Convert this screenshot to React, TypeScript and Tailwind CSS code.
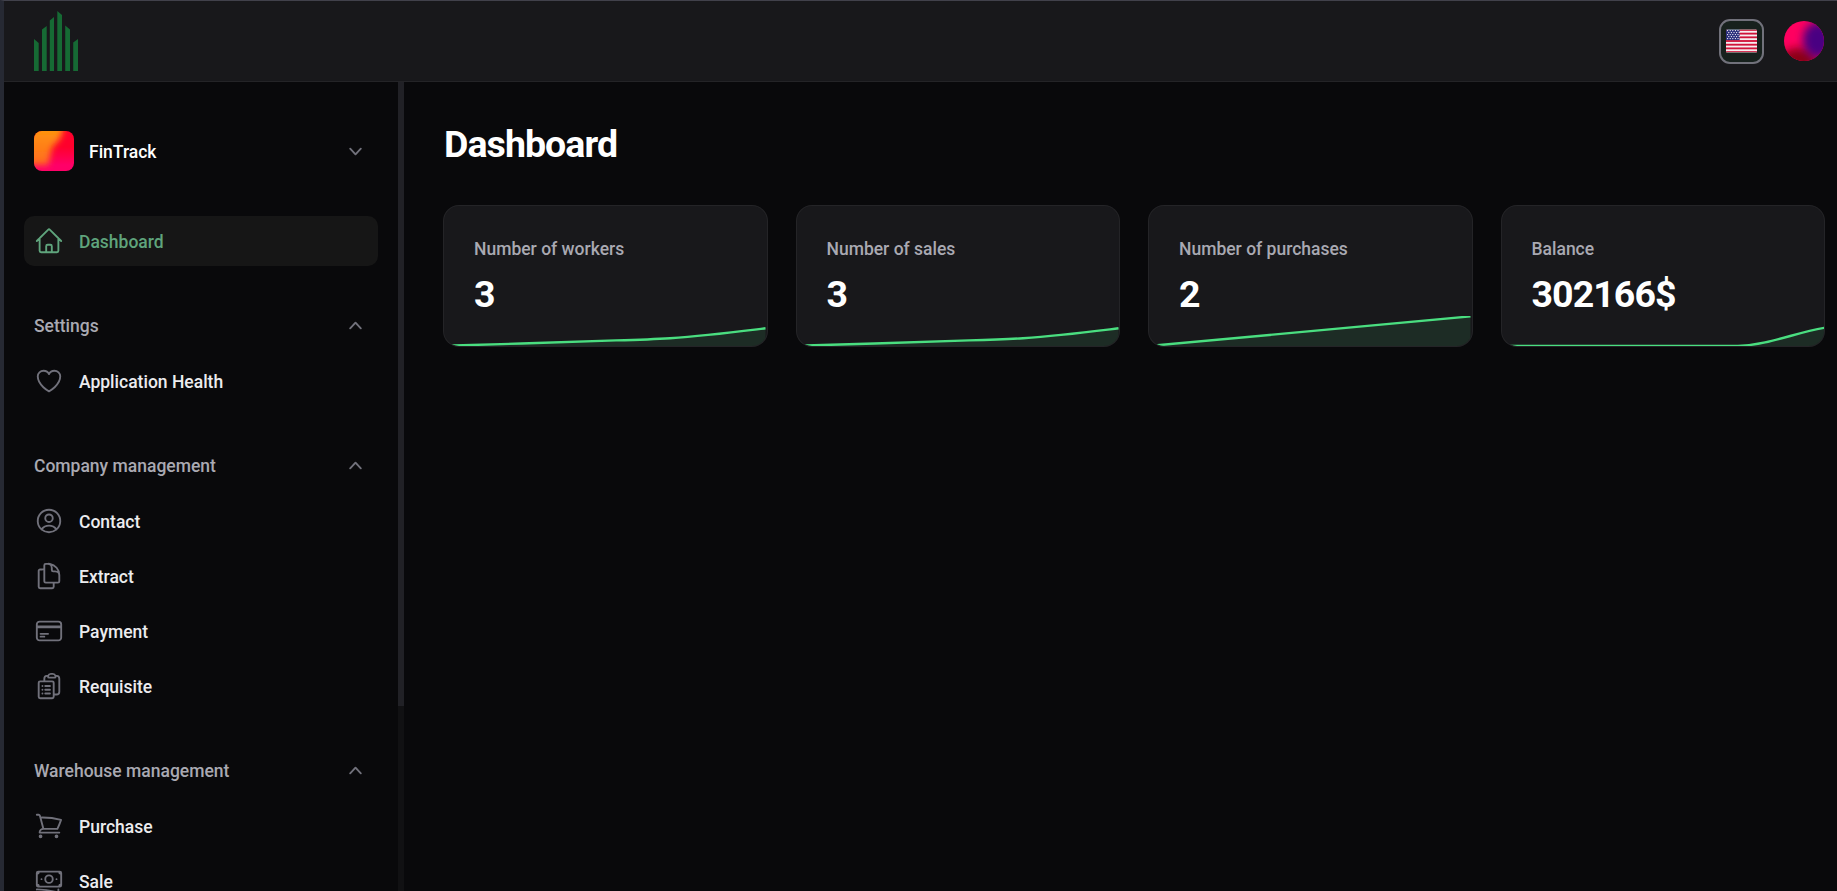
import React from "react";
import type { IconType } from "react-icons";
import {
  HiOutlineHome,
  HiOutlineHeart,
  HiOutlineUserCircle,
  HiOutlineDocumentDuplicate,
  HiOutlineCreditCard,
  HiOutlineClipboardDocumentList,
  HiOutlineShoppingCart,
  HiOutlineBanknotes,
} from "react-icons/hi2";

type Item = { label: string; icon: IconType };
type Group = { title: string; items: Item[] };

const groups: Group[] = [
  { title: "Settings", items: [{ label: "Application Health", icon: HiOutlineHeart }] },
  {
    title: "Company management",
    items: [
      { label: "Contact", icon: HiOutlineUserCircle },
      { label: "Extract", icon: HiOutlineDocumentDuplicate },
      { label: "Payment", icon: HiOutlineCreditCard },
      { label: "Requisite", icon: HiOutlineClipboardDocumentList },
    ],
  },
  {
    title: "Warehouse management",
    items: [
      { label: "Purchase", icon: HiOutlineShoppingCart },
      { label: "Sale", icon: HiOutlineBanknotes },
    ],
  },
];

const rising = "M0 29.8 C60 28.4 110 26.2 172 24.4 C200 23.6 212 23.1 226 22.2 C262 19.8 292 15.9 321.5 12.3";

const stats = [
  { label: "Number of workers", value: "3", line: rising },
  { label: "Number of sales", value: "3", line: rising },
  { label: "Number of purchases", value: "2", line: "M0 30 L321.5 0.4" },
  { label: "Balance", value: "302166$", line: "M0 30 L236 30 C268 28.5 292 17 322.5 11.8" },
];

function Chevron({ up = false }: { up?: boolean }) {
  return (
    <svg
      viewBox="0 0 20 20"
      fill="currentColor"
      className={up ? "mb-px size-[25px] shrink-0 text-zinc-500" : "mt-px size-[25px] shrink-0 text-zinc-500"}
    >
      {up ? (
        <path d="M14.77 12.79a.75.75 0 01-1.06-.02L10 8.832 6.29 12.77a.75.75 0 11-1.08-1.04l4.25-4.5a.75.75 0 011.08 0l4.25 4.5a.75.75 0 01-.02 1.06z" />
      ) : (
        <path d="M5.23 7.21a.75.75 0 011.06.02L10 11.168l3.71-3.938a.75.75 0 111.08 1.04l-4.25 4.5a.75.75 0 01-1.08 0l-4.25-4.5a.75.75 0 01.02-1.06z" />
      )}
    </svg>
  );
}

function Logo() {
  return (
    <svg viewBox="0 0 44 60" className="h-[60px] w-11" fill="#166a34">
      <path d="M0 28 L4.7 32 V60 H0 Z" />
      <path d="M8 18.5 L12.7 15 V60 H8 Z" />
      <path d="M15.8 9.5 L20 6 V60 H15.8 Z" />
      <path d="M23.3 0 L28 4 V60 H23.3 Z" />
      <path d="M31.2 14.5 L36 18.5 V60 H31.2 Z" />
      <path d="M39.2 31.5 L44 28 V60 H39.2 Z" />
    </svg>
  );
}

function TenantAvatar() {
  return (
    <svg viewBox="0 0 40 40" className="size-10 rounded-[8px]">
      <defs>
        <linearGradient id="tenant-base" x1="0" y1="0" x2="0" y2="1">
          <stop offset="0.4" stopColor="#ff002c" />
          <stop offset="0.85" stopColor="#ff0068" />
        </linearGradient>
        <linearGradient id="tenant-warm" x1="0" y1="0" x2="0" y2="1">
          <stop offset="0" stopColor="#ff9c0c" />
          <stop offset="1" stopColor="#ff6a20" />
        </linearGradient>
        <filter id="tenant-blur" x="-50%" y="-50%" width="200%" height="200%">
          <feGaussianBlur stdDeviation="3" />
        </filter>
      </defs>
      <rect width="40" height="40" fill="url(#tenant-base)" />
      <path
        d="M2 -8 H30 C29 3 26 10 20 14 C16 18 17 26 14 34 H-8 V8 Z"
        fill="url(#tenant-warm)"
        filter="url(#tenant-blur)"
      />
    </svg>
  );
}

function UserAvatar() {
  return (
    <svg viewBox="0 0 40 40" className="size-10 rounded-full">
      <defs>
        <filter id="user-blur" x="-60%" y="-60%" width="220%" height="220%">
          <feGaussianBlur stdDeviation="4" />
        </filter>
      </defs>
      <rect width="40" height="40" fill="#ff0060" />
      <ellipse cx="14" cy="40" rx="18" ry="13" fill="#8c0012" filter="url(#user-blur)" />
      <ellipse cx="34" cy="19" rx="15" ry="18" fill="#480082" filter="url(#user-blur)" />
    </svg>
  );
}

function Flag() {
  const stripes = [0, 2, 4, 6, 8, 10, 12];
  const stars: [number, number][] = [];
  for (let r = 0; r < 5; r++) {
    for (let c = 0; c < 5; c++) {
      stars.push([1.6 + c * 2.6 + (r % 2 ? 1.2 : 0), 1.6 + r * 2]);
    }
  }
  return (
    <svg viewBox="0 0 31 24" className="h-6 w-[31px] rounded-[2.5px]">
      <rect width="31" height="24" fill="#f6eef0" />
      {stripes.map((i) => (
        <rect key={i} y={(i * 24) / 13} width="31" height={24 / 13} fill="#d0143a" />
      ))}
      <rect width="13.6" height="11.1" fill="#2b2f7c" />
      {stars.map(([x, y], i) => (
        <circle key={i} cx={x} cy={y} r="0.65" fill="#fff" />
      ))}
      <rect width="31" height="1" fill="#6f8078" fillOpacity="0.75" />
      <rect y="23" width="31" height="1" fill="#6f8078" fillOpacity="0.9" />
    </svg>
  );
}

function NavItem({ item, active = false }: { item: Item; active?: boolean }) {
  const Icon = item.icon;
  return (
    <li
      className={
        active
          ? "flex h-[50px] shrink-0 items-center gap-[15px] rounded-[10px] bg-[#161616] px-2.5 text-[#5fa47c]"
          : "flex h-[50px] shrink-0 items-center gap-[15px] rounded-[10px] px-2.5 text-[#ececef]"
      }
    >
      <Icon className={active ? "size-[30px] shrink-0" : "size-[30px] shrink-0 text-zinc-500"} />
      <span className="pt-0.5">{item.label}</span>
    </li>
  );
}

function Stat({ label, value, line }: { label: string; value: string; line: string }) {
  return (
    <section className="relative flex h-[140px] flex-col gap-2.5 rounded-[15px] bg-zinc-900 px-[30px] pt-[31px] ring-1 ring-[#242427]">
      <h3 className="text-[17.5px] leading-[25px] font-medium text-[#a9a9b2]">{label}</h3>
      <p className="text-[37.5px] leading-[45px] font-bold tracking-[-0.025em] text-white">{value}</p>
      <div className="absolute inset-x-0 bottom-0 h-[30px] overflow-hidden rounded-b-[15px]">
        <svg viewBox="0 0 322.5 30" preserveAspectRatio="none" className="size-full">
          <path d={`${line} V30 H0 Z`} fill="#4ade80" fillOpacity="0.1" />
          <path d={line} fill="none" stroke="#4ade80" strokeWidth="2.4" />
        </svg>
      </div>
    </section>
  );
}

export default function App() {
  return (
    <div className="flex h-[891px] w-[1837px] flex-col overflow-hidden border-t border-l-4 border-t-[#41414b] border-l-[#262933] bg-[#09090b] font-[Roboto,sans-serif] text-[17.5px] leading-[25px] font-medium text-white">
      <header className="flex h-[81px] shrink-0 items-center justify-between border-b border-[#242427] bg-zinc-900 pr-[13px] pl-[30px]">
        <Logo />
        <div className="flex items-center gap-5">
          <div className="flex size-[45px] items-center justify-center rounded-[11px] border-2 border-zinc-500 bg-[#17211d]">
            <Flag />
          </div>
          <UserAvatar />
        </div>
      </header>

      <div className="flex min-h-0 flex-1">
        <aside className="flex w-[400px] shrink-0">
          <div className="flex w-[394px] flex-col overflow-hidden px-5 pt-[39px]">
            <div className="flex h-[60px] shrink-0 items-center gap-[15px] px-2.5">
              <TenantAvatar />
              <span className="flex-1 pt-0.5">FinTrack</span>
              <Chevron />
            </div>
            <ul className="mt-[35px] flex shrink-0 flex-col">
              <NavItem item={{ label: "Dashboard", icon: HiOutlineHome }} active />
            </ul>
            {groups.map((g) => (
              <div key={g.title} className="mt-[35px] flex shrink-0 flex-col gap-[5px]">
                <div className="flex h-[50px] items-center justify-between px-2.5 text-[#a9a9b2]">
                  <span>{g.title}</span>
                  <Chevron up />
                </div>
                <ul className="flex flex-col gap-[5px]">
                  {g.items.map((i) => (
                    <NavItem key={i.label} item={i} />
                  ))}
                </ul>
              </div>
            ))}
          </div>
          <div className="w-1.5 bg-[#111113]">
            <div className="h-[624px] bg-[#212126]" />
          </div>
        </aside>

        <main className="flex-1 pt-10 pr-[13px] pl-10">
          <h1 className="text-[37.5px] leading-[45px] font-bold tracking-[-0.025em]">Dashboard</h1>
          <div className="mt-[39px] grid grid-cols-4 gap-[30px]">
            {stats.map((s) => (
              <Stat key={s.label} {...s} />
            ))}
          </div>
        </main>
      </div>
    </div>
  );
}
